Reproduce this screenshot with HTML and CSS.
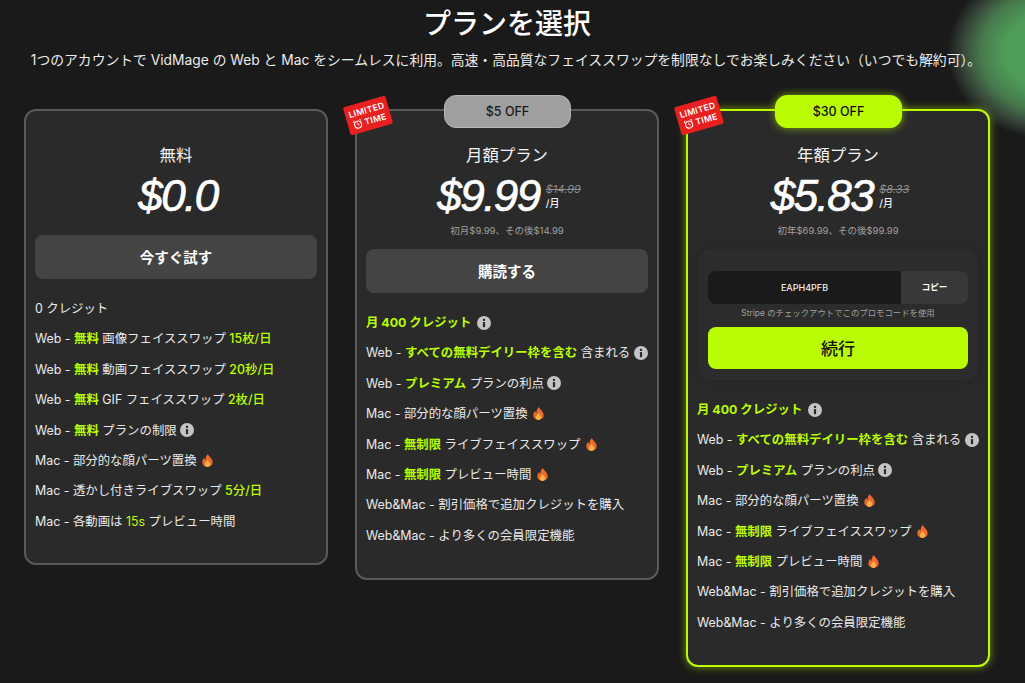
FILE: index.html
```html
<!DOCTYPE html>
<html lang="ja">
<head>
    <meta charset="UTF-8">
    <meta name="viewport" content="width=device-width, initial-scale=1.0">
    <title>プランを選択</title>
    <link rel="stylesheet" href="styles.css">
</head>
<body>
    <svg width="0" height="0" class="defs">
        <symbol id="info" viewBox="0 0 14 14">
            <circle cx="7" cy="7" r="7" fill="#c4c4c4"/>
            <rect x="5.9" y="2.8" width="2.2" height="2.1" rx="0.6" fill="#2a2a2a"/>
            <rect x="5.9" y="6" width="2.2" height="5.2" rx="0.6" fill="#2a2a2a"/>
        </symbol>
        <symbol id="fire" viewBox="0 0 12 14">
            <path d="M6.4 0C7 2.4 11.6 4.6 11.6 9c0 3-2.5 5-5.6 5S.4 12 .4 9c0-2 1-3.600 2-4.600.2 1 .7 1.700 1.400 2C3.700 4 4.800 1.500 6.400 0z" fill="#ee6a2c"/>
            <path d="M6.200 6.400c.5 1.400 2.700 2.500 2.700 4.500 0 1.800-1.300 3.100-2.900 3.100s-2.900-1.300-2.900-3c0-1.900 2.300-2.800 3.100-4.600z" fill="#f9b04a"/>
        </symbol>
        <symbol id="clock" viewBox="0 0 12 12">
            <circle cx="6" cy="6.600" r="4.200" fill="none" stroke="#fff" stroke-width="1.200"/>
            <path d="M6 4.200v2.600l1.600 1M.8 2.800 2.800 1M11.200 2.800 9.200 1" fill="none" stroke="#fff" stroke-width="1.100"/>
        </symbol>
    </svg>

    <main class="page">
        <h1 class="title">プランを選択</h1>
        <p class="subtitle">1つのアカウントで VidMage の Web と Mac をシームレスに利用。高速・高品質なフェイススワップを制限なしでお楽しみください（いつでも解約可）。</p>

        <div class="plans">
            <!-- 無料 -->
            <section class="card card-free">
                <h2 class="plan-name">無料</h2>
                <div class="price-row">
                    <span class="price">$0.0</span>
                </div>
                <button class="btn">今すぐ試す</button>
                <ul class="features">
                    <li>0 クレジット</li>
                    <li>Web - <b>無料</b> 画像フェイススワップ <em>15枚/日</em></li>
                    <li>Web - <b>無料</b> 動画フェイススワップ <em>20秒/日</em></li>
                    <li>Web - <b>無料</b> GIF フェイススワップ <em>2枚/日</em></li>
                    <li>Web - <b>無料</b> プランの制限 <svg class="ico"><use href="#info"/></svg></li>
                    <li>Mac - 部分的な顔パーツ置換 <svg class="ico-fire"><use href="#fire"/></svg></li>
                    <li>Mac - 透かし付きライブスワップ <em>5分/日</em></li>
                    <li>Mac - 各動画は <i>15s</i> プレビュー時間</li>
                </ul>
            </section>

            <!-- 月額 -->
            <section class="card">
                <div class="limited"><span>LIMITED</span><span><svg class="clock"><use href="#clock"/></svg> TIME</span></div>
                <div class="off">$5 OFF</div>
                <h2 class="plan-name">月額プラン</h2>
                <div class="price-row">
                    <span class="price">$9.99</span>
                    <span class="price-side"><s>$14.99</s><span>/月</span></span>
                </div>
                <p class="price-note">初月$9.99、その後$14.99</p>
                <button class="btn">購読する</button>
                <ul class="features">
                    <li><b>月 400 クレジット</b> <svg class="ico ico-gap"><use href="#info"/></svg></li>
                    <li>Web - <b>すべての無料デイリー枠を含む</b> 含まれる <svg class="ico"><use href="#info"/></svg></li>
                    <li>Web - <b>プレミアム</b> プランの利点 <svg class="ico"><use href="#info"/></svg></li>
                    <li>Mac - 部分的な顔パーツ置換 <svg class="ico-fire"><use href="#fire"/></svg></li>
                    <li>Mac - <b>無制限</b> ライブフェイススワップ <svg class="ico-fire"><use href="#fire"/></svg></li>
                    <li>Mac - <b>無制限</b> プレビュー時間 <svg class="ico-fire"><use href="#fire"/></svg></li>
                    <li>Web&amp;Mac - 割引価格で追加クレジットを購入</li>
                    <li>Web&amp;Mac - より多くの会員限定機能</li>
                </ul>
            </section>

            <!-- 年額 -->
            <section class="card card-best">
                <div class="limited"><span>LIMITED</span><span><svg class="clock"><use href="#clock"/></svg> TIME</span></div>
                <div class="off off-best">$30 OFF</div>
                <h2 class="plan-name">年額プラン</h2>
                <div class="price-row">
                    <span class="price">$5.83</span>
                    <span class="price-side"><s>$8.33</s><span>/月</span></span>
                </div>
                <p class="price-note">初年$69.99、その後$99.99</p>
                <div class="promo">
                    <div class="code-row">
                        <span class="code">EAPH4PFB</span>
                        <span class="copy">コピー</span>
                    </div>
                    <p class="promo-hint">Stripe のチェックアウトでこのプロモコードを使用</p>
                    <button class="btn btn-go">続行</button>
                </div>
                <ul class="features">
                    <li><b>月 400 クレジット</b> <svg class="ico ico-gap"><use href="#info"/></svg></li>
                    <li>Web - <b>すべての無料デイリー枠を含む</b> 含まれる <svg class="ico"><use href="#info"/></svg></li>
                    <li>Web - <b>プレミアム</b> プランの利点 <svg class="ico"><use href="#info"/></svg></li>
                    <li>Mac - 部分的な顔パーツ置換 <svg class="ico-fire"><use href="#fire"/></svg></li>
                    <li>Mac - <b>無制限</b> ライブフェイススワップ <svg class="ico-fire"><use href="#fire"/></svg></li>
                    <li>Mac - <b>無制限</b> プレビュー時間 <svg class="ico-fire"><use href="#fire"/></svg></li>
                    <li>Web&amp;Mac - 割引価格で追加クレジットを購入</li>
                    <li>Web&amp;Mac - より多くの会員限定機能</li>
                </ul>
            </section>
        </div>
    </main>
</body>
</html>
```

FILE: styles.css
```css
* {
    box-sizing: border-box;
}

html, body {
    height: 100%;
}

body {
    margin: 0;
    overflow: hidden;
    background-color: #1a1a1a;
    background-image: radial-gradient(ellipse 105px 88px at 1052px 52px, #4f9f58 0%, #4f9c57 45%, #47794d 68%, #38493a 84%, #1a1a1a 100%);
    background-repeat: no-repeat;
    color: #f2f2f2;
    font-family: Inter, "Noto Sans CJK JP", sans-serif;
}

.defs {
    position: absolute;
}

.page {
    padding: 0 35px 0 24px;
}

.title {
    margin: 0;
    padding-top: 3px;
    height: 50px;
    font-size: 28px;
    line-height: 42px;
    font-weight: 500;
    text-align: center;
    color: #fff;
}

.subtitle {
    margin: 0 -7px 0 -9px;
    height: 59px;
    font-size: 13.8px;
    line-height: 20px;
    text-align: center;
    color: #ececec;
}

.plans {
    display: grid;
    grid-template-columns: repeat(3, 304px);
    justify-content: space-between;
    align-items: start;
}

.card {
    position: relative;
    padding: 32px 9px 27px;
    border: 2px solid #5a5a5a;
    border-radius: 12px;
    background-color: #2a2a2a;
}

.card-free {
    padding-bottom: 26px;
}

.card-best {
    border-color: #b9fc03;
    box-shadow: 0 0 8px rgba(185, 252, 3, 0.55);
}

.limited {
    position: absolute;
    top: -10px;
    left: -11px;
    width: 44px;
    height: 29px;
    display: flex;
    flex-direction: column;
    align-items: center;
    justify-content: center;
    border-radius: 2px;
    background-color: #e8201f;
    color: #fff;
    font-size: 8.6px;
    font-weight: 600;
    line-height: 11px;
    letter-spacing: 0.3px;
    transform: rotate(-16deg);
}

.clock {
    width: 10px;
    height: 10px;
    vertical-align: -2px;
}

.off {
    position: absolute;
    top: -16px;
    left: 50%;
    width: 127px;
    height: 33px;
    margin-left: -63px;
    border: 1px solid #b5b5b5;
    border-radius: 12px;
    background-color: #9f9f9f;
    color: #1a1a1a;
    font-size: 12.5px;
    font-weight: 500;
    line-height: 31px;
    text-align: center;
}

.off-best {
    border-color: #b9fc03;
    background-color: #b9fc03;
    color: #111;
    box-shadow: 0 0 8px rgba(185, 252, 3, 0.6);
}

.plan-name {
    margin: 0;
    font-size: 16.4px;
    line-height: 24px;
    font-weight: 400;
    text-align: center;
}

.price-row {
    display: flex;
    justify-content: center;
    align-items: center;
    height: 50px;
    margin-top: 4px;
    padding-left: 4px;
}

.price {
    font-family: "Liberation Sans", sans-serif;
    font-size: 44px;
    font-style: italic;
    letter-spacing: -1.5px;
    line-height: 50px;
    color: #fff;
    -webkit-text-stroke: 0.7px #fff;
}

.price-side {
    display: flex;
    flex-direction: column;
    margin-left: 6px;
    font-size: 10px;
    line-height: 14px;
    font-weight: 500;
}

.price-side s {
    font-size: 11px;
    font-style: italic;
    font-weight: 400;
    color: #8c8c8c;
}

.price-note {
    margin: 1px 0 0;
    height: 17px;
    font-size: 9.5px;
    line-height: 17px;
    text-align: center;
    color: #a0a0a0;
}

.btn {
    display: block;
    width: 100%;
    height: 44px;
    margin-top: 10px;
    border: none;
    border-radius: 8px;
    background-color: #444;
    color: #fff;
    font-family: inherit;
    font-size: 14.5px;
    font-weight: 700;
    padding-bottom: 2px;
}

.card-free .btn {
    margin-top: 14px;
}

.features {
    list-style: none;
    margin: 15px 0 0;
    padding: 0;
    font-size: 12.4px;
    color: #eaeaea;
}

.features li {
    height: 30.4px;
    line-height: 30.4px;
    white-space: nowrap;
}

.features b {
    font-weight: 700;
    color: #b9fc03;
}

.features em,
.features i {
    font-style: normal;
    font-weight: 500;
    color: #b9fc03;
}

.features i {
    font-weight: 400;
}

.ico {
    width: 14px;
    height: 14px;
    vertical-align: -2.5px;
}

.ico-gap {
    margin-left: 2px;
}

.ico-fire {
    width: 11px;
    height: 13px;
    vertical-align: -2px;
    margin-left: 2px;
}

.promo {
    margin: 10px 1px 0;
    padding: 22px 10px 9px;
    height: 131px;
    border-radius: 12px;
    background-color: #2c2c2c;
    box-shadow: 0 0 12px rgba(0, 0, 0, 0.15);
}

.code-row {
    display: flex;
    height: 33px;
    border-radius: 8px;
    overflow: hidden;
    font-size: 9px;
    line-height: 33px;
    text-align: center;
    font-weight: 500;
}

.code {
    flex: 1;
    background-color: #1a1a1a;
    color: #eee;
}

.copy {
    width: 67px;
    background-color: #383838;
    color: #fff;
    font-size: 8.5px;
    font-weight: 700;
}

.promo-hint {
    margin: 0;
    height: 23px;
    font-size: 8.4px;
    line-height: 18px;
    text-align: center;
    color: #a0a0a0;
}

.btn-go {
    height: 42px;
    margin: 0;
    background-color: #b9fc03;
    color: #111;
    font-size: 17px;
    font-weight: 500;
}
```
